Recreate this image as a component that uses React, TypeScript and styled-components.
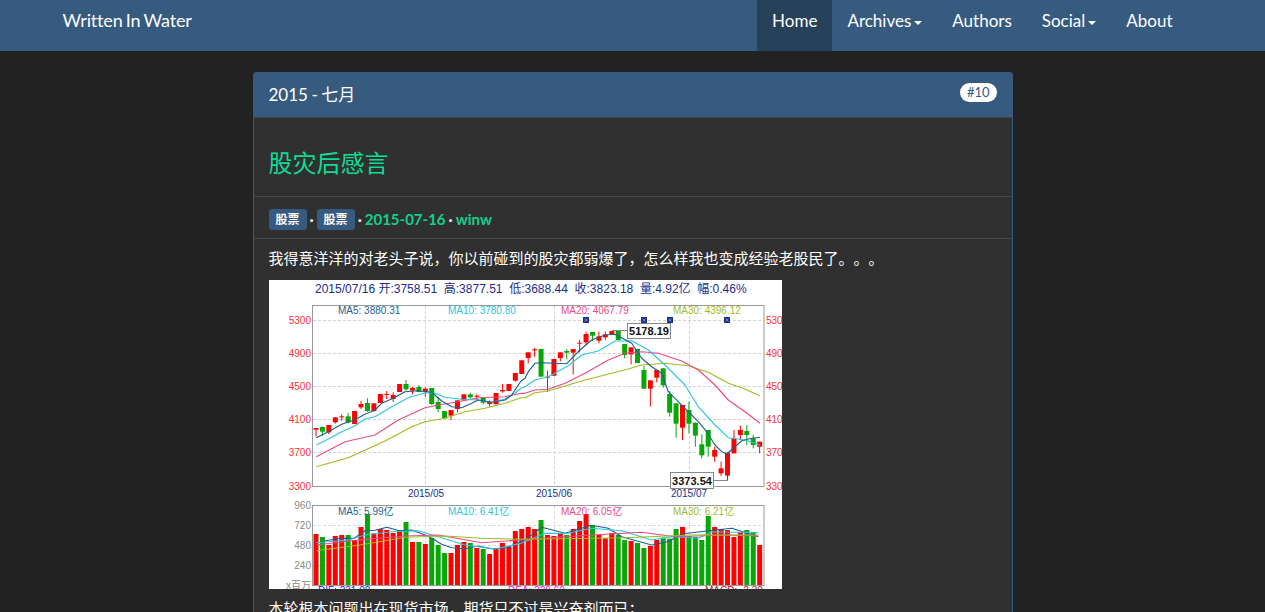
import React from "react";
import styled, { createGlobalStyle } from "styled-components";

const Global = createGlobalStyle`
  html, body { margin: 0; padding: 0; background: #222222; height: 100%; overflow: hidden; }
  body { font-family: Lato, "Noto Sans CJK SC", sans-serif; font-size: 15px; color: #ffffff; text-spacing-trim: space-all; }
`;
const Navbar = styled.nav`height: 51px; background: #375a7f;`;
const NavContainer = styled.div`
  max-width: 1170px; margin: 0 auto; padding: 0 15px; box-sizing: border-box;
  display: flex; justify-content: space-between; height: 100%;
`;
const Brand = styled.a`font-size: 18px; line-height: 41px; color: #fff; word-spacing: -1.2px; letter-spacing: -0.15px;`;
const NavList = styled.ul`display: flex; list-style: none; margin: 0; padding: 0 15px 0 0;`;
const NavItem = styled.li<{ $active?: boolean }>`
  padding: 0 15px; font-size: 17px; line-height: 41px; color: #fff;
  background: ${(p) => (p.$active ? "#28415b" : "transparent")};
`;
const Caret = styled.span`
  display: inline-block; width: 0; height: 0; margin-left: 3px; vertical-align: middle;
  border-top: 4px solid #fff; border-left: 4px solid transparent; border-right: 4px solid transparent;
`;
const Main = styled.main`width: 760px; margin: 21px auto 0;`;
const Panel = styled.section`
  border: 1px solid #375a7f; border-radius: 4px; background: #303030; box-sizing: border-box; height: 700px;
`;
const PanelHeading = styled.header`
  height: 45px; margin: -1px -1px 0; padding: 0 16px 0 16px; background: #375a7f;
  border-radius: 4px 4px 0 0; display: flex; justify-content: space-between;
  border-bottom: 1px solid #464646;
`;
const PanelTitle = styled.h3`margin: 0; font-size: 17px; font-weight: 400; line-height: 45px; color: #fff; word-spacing: -0.8px;`;
const Badge = styled.span`
  margin: 11px 0 0; height: 19px; padding: 0 7px; border-radius: 10px; background: #fff; color: #375a7f;
  font-size: 13px; line-height: 19px;
`;
const TitleRow = styled.div`height: 79px; padding: 0 15px; display: flex; align-items: center; border-bottom: 1px solid #464646; box-sizing: border-box;`;
const PostTitle = styled.h2`margin: 8px 0 0; font-size: 24px; font-weight: 400; color: #0cdc94; font-family: "Noto Sans CJK SC", sans-serif;`;
const MetaRow = styled.div`
  height: 42px; padding: 3px 15px 0; display: flex; align-items: center; gap: 3px; border-bottom: 1px solid #464646;
  box-sizing: border-box;
`;
const Tag = styled.span`
  width: 38px; height: 21px; border-radius: 3px; background: #375a7f; color: #fff; font-size: 12px; font-weight: 700;
  line-height: 21px; text-align: center;
`;
const Dot = styled.span`color: #fff; font-weight: 700; font-size: 15px;`;
const MetaLink = styled.a`color: #10d08c; font-weight: 700; font-size: 15px;`;
const Content = styled.div`padding: 8px 15px 0;`;
const Para = styled.p`margin: 0 0 12px; line-height: 21px; color: #fff; font-family: "Noto Sans CJK SC", sans-serif; font-size: 15px;`;
const ChartSvg = styled.svg`display: block; width: 513px; height: 309px; background: #fff; margin-bottom: 8px; overflow: hidden;
  text { font-family: "Liberation Sans", "Noto Sans CJK SC", sans-serif; font-size: 10px; }
`;

type C = [number, number, number, number, "r" | "g"];
const candles: C[] = [
  [459,485,459,464,"r"],[455,483,456,470,"g"],[450,477,450,472,"r"],[427,446,427,442,"r"],[418,438,424,427,"r"],
  [414,445,424,442,"g"],[408,447,408,447,"r"],[378,402,387,397,"r"],[370,410,384,408,"g"],[385,410,385,408,"r"],
  [357,384,357,384,"r"],[348,372,357,360,"r"],[352,381,360,372,"r"],[327,351,327,351,"r"],[315,347,327,343,"g"],
  [335,358,339,347,"r"],[330,352,336,351,"g"],[337,365,341,351,"r"],[339,390,339,387,"g"],[365,412,381,402,"g"],
  [408,432,408,430,"g"],[405,435,405,422,"r"],[376,412,376,402,"r"],[358,376,358,376,"r"],[353,371,358,367,"g"],
  [358,375,362,365,"r"],[365,388,367,383,"g"],[376,395,381,387,"r"],[354,388,354,388,"r"],[327,353,345,349,"r"],
  [327,348,327,348,"r"],[294,320,294,317,"r"],[256,297,256,297,"r"],[232,265,232,249,"r"],[219,245,223,226,"r"],
  [222,305,222,305,"g"],[287,350,305,308,"r"],[252,302,252,302,"r"],[232,259,232,249,"r"],[222,253,228,233,"g"],
  [222,298,222,233,"r"],[195,232,203,206,"r"],[170,210,177,202,"r"],[171,198,171,182,"g"],[170,205,184,197,"r"],
  [170,195,178,187,"r"],[168,178,168,178,"r"],[167,195,167,195,"g"],[207,250,207,240,"g"],[217,268,217,238,"r"],
  [222,264,222,264,"g"],[273,341,285,341,"g"],[316,394,316,341,"r"],[285,322,285,308,"r"],[280,338,280,331,"g"],
  [348,425,357,413,"g"],[385,488,385,446,"g"],[390,495,390,458,"r"],[380,475,405,446,"g"],[443,515,443,482,"g"],
  [478,550,508,541,"g"],[465,545,465,515,"g"],[515,560,525,545,"r"],[560,603,580,595,"r"],[533,615,533,602,"r"],
  [465,535,490,535,"r"],[452,495,465,480,"r"],[450,510,468,480,"g"],[480,520,490,510,"g"],[500,535,500,515,"r"],
];
const vols: [number, "r" | "g"][] = [
  [282,"r"],[291,"g"],[315,"r"],[288,"r"],[285,"r"],[285,"g"],[300,"r"],[261,"r"],[222,"g"],[280,"r"],[267,"r"],[270,"r"],
  [279,"r"],[270,"r"],[246,"g"],[306,"r"],[306,"g"],[312,"r"],[294,"g"],[315,"g"],[339,"g"],[339,"r"],[315,"r"],[306,"r"],
  [309,"g"],[324,"r"],[327,"g"],[342,"r"],[327,"r"],[309,"r"],[321,"r"],[273,"r"],[267,"r"],
  [261,"r"],[267,"r"],[240,"g"],[285,"r"],[288,"r"],[282,"r"],[285,"g"],[267,"r"],[243,"r"],[222,"r"],[255,"g"],[285,"r"],
  [295,"r"],[279,"r"],[285,"g"],[300,"g"],[303,"r"],[309,"g"],[324,"g"],[318,"r"],[300,"r"],[293,"g"],[296,"g"],[267,"g"],
  [261,"r"],[288,"g"],[291,"g"],[300,"g"],[228,"g"],[261,"r"],[267,"r"],[270,"r"],[291,"r"],[276,"r"],[270,"g"],[276,"g"],[315,"r"],
];
type Pt = [number, number];
const COL = { ma5: "#1f5f8f", ma10: "#2cc5e2", ma20: "#ec4a84", ma30: "#9fbd1f" };
const priceLines: [string, Pt[], Pt[]][] = [
  [COL.ma30, [[154,575],[250,548],[360,498],[440,455],[480,440],[540,430],[600,410],[660,400],[720,385],[768,368]],
    [[0,368],[30,353],[70,348],[130,330],[180,315],[260,295],[310,282],[350,270],[420,265],[490,272],[550,292],[610,325],[650,338],[705,362]]],
  [COL.ma20, [[154,545],[240,500],[330,480],[400,435],[480,398],[520,390],[580,380],[640,368],[720,365],[768,355]],
    [[0,355],[30,345],[70,343],[120,325],[180,295],[250,255],[300,235],[350,230],[400,235],[470,258],[520,285],[570,330],[610,375],[660,410],[705,445]]],
  [COL.ma10, [[154,510],[190,492],[230,470],[270,452],[300,432],[330,425],[380,395],[430,368],[480,353],[510,355],[540,367],[590,373],[640,375],[680,382],[720,372],[750,355],[768,340]],
    [[0,335],[30,315],[70,305],[130,272],[170,240],[220,228],[270,198],[320,197],[370,225],[420,270],[480,330],[520,395],[570,450],[610,488],[660,495],[705,510]]],
  [COL.ma5, [[154,488],[190,470],[230,448],[268,435],[300,418],[330,405],[350,385],[385,370],[420,350],[460,347],[500,352],[530,378],[560,395],[590,398],[620,385],[640,375],[680,382],[720,375],[740,360],[768,318]],
    [[0,310],[10,290],[30,265],[50,263],[125,266],[165,225],[200,195],[240,180],[270,178],[320,205],[350,250],[380,275],[410,295],[430,350],[480,400],[520,440],[545,470],[570,510],[590,530],[605,537],[625,520],[650,497],[680,490],[705,487]]],
];
const volLines: [string, Pt[], Pt[]][] = [
  [COL.ma5, [[154,310],[190,301],[230,295],[268,295],[300,272],[330,271],[366,262],[403,272],[440,270],[480,285],[500,295],[530,313],[560,323],[600,326],[640,318],[680,326],[720,325],[750,313],[768,305]],
    [[0,300],[50,262],[120,280],[200,256],[250,265],[290,290],[380,315],[430,305],[470,282],[550,272],[620,265],[700,290]]],
  [COL.ma10, [[154,308],[250,300],[300,285],[380,275],[460,272],[520,290],[600,315],[690,327],[768,310]],
    [[0,305],[60,280],[130,280],[200,265],[290,272],[380,300],[440,290],[520,295],[560,275],[700,278]]],
  [COL.ma20, [[154,315],[280,300],[420,288],[520,285],[650,308],[768,300]],
    [[50,295],[200,285],[350,277],[450,290],[600,285],[700,288]]],
  [COL.ma30, [[154,332],[300,313],[420,292],[540,288],[650,295],[768,298]],
    [[100,296],[300,293],[500,285],[700,285]]],
];
const RED = "#fe0000";
const GREEN = "#06a706";
const NAVY = "#1c2e8c";
const cx = (i: number) => 47 + 6.43 * i;
const py = (z: number) => z / 3 - 5;
const pts = (l: Pt[], r: Pt[], yf: (n: number) => number) =>
  [...l.map(([x, y]) => `${(x / 3 - 4).toFixed(1)},${yf(y).toFixed(1)}`), ...r.map(([x, y]) => `${(256 + x / 3).toFixed(1)},${yf(y).toFixed(1)}`)].join(" ");

const X = (x: number) => x - 269;
const Y = (y: number) => y - 280;

const Chart = () => (
  <ChartSvg viewBox="0 0 513 309" role="img">
    <text x={X(315)} y={Y(293)} fill={NAVY} style={{ fontSize: 12 }} xmlSpace="preserve">2015/07/16 开:3758.51  高:3877.51  低:3688.44  收:3823.18  量:4.92亿  幅:0.46%</text>
    {[320, 353, 386, 419, 452].map((y) => (
      <line key={y} x1={X(313)} x2={X(764)} y1={Y(y) + 0.5} y2={Y(y) + 0.5} stroke="#d4d4d4" strokeDasharray="3 2" />
    ))}
    {[525, 545, 565].map((y) => (
      <line key={y} x1={X(313)} x2={X(764)} y1={Y(y) + 0.5} y2={Y(y) + 0.5} stroke="#dcdcdc" strokeDasharray="3 2" />
    ))}
    {[425, 554, 689].map((x) => (
      <React.Fragment key={x}>
        <line x1={X(x) + 0.5} x2={X(x) + 0.5} y1={Y(306)} y2={Y(486)} stroke="#d4d4d4" strokeDasharray="3 2" />
        <line x1={X(x) + 0.5} x2={X(x) + 0.5} y1={Y(506)} y2={Y(585)} stroke="#dcdcdc" strokeDasharray="3 2" />
      </React.Fragment>
    ))}
    {vols.map(([z, c], i) => (
      <rect key={i} x={cx(i) - 2.5} y={160 + z / 3} width={5} height={(435 - z) / 3} fill={c === "r" ? RED : GREEN} />
    ))}
    {candles.map(([hi, lo, t, b, c], i) => {
      const f = c === "r" ? RED : GREEN;
      const x = cx(i);
      return (
        <g key={i}>
          <line x1={x} x2={x} y1={py(hi)} y2={py(lo)} stroke={f} />
          <rect x={x - 2.5} y={py(t)} width={5} height={Math.max(1, (b - t) / 3)} fill={f} />
        </g>
      );
    })}
    {priceLines.map(([c, l, r]) => (
      <polyline key={c} points={pts(l, r, py)} fill="none" stroke={c} strokeWidth={1.15} strokeLinejoin="round" />
    ))}
    {volLines.map(([c, l, r]) => (
      <polyline key={c} points={pts(l, r, (z) => 160 + z / 3)} fill="none" stroke={c} strokeWidth={1.15} strokeLinejoin="round" />
    ))}
    <rect x={X(312.5)} y={Y(305.5)} width={451.5} height={181} fill="none" stroke="#999" />
    <rect x={X(312.5)} y={Y(505.5)} width={451.5} height={80} fill="none" stroke="#999" />
    {["5300", "4900", "4500", "4100", "3700", "3300"].map((t, i) => (
      <React.Fragment key={t}>
        <text x={X(311)} y={Y([324, 357, 390, 423, 456, 490][i])} fill="#fb2f3a" textAnchor="end">{t}</text>
        <text x={X(766)} y={Y([324, 357, 390, 423, 456, 490][i])} fill="#fb2f3a">{t.slice(0, 3)}</text>
      </React.Fragment>
    ))}
    {["960", "720", "480", "240"].map((t, i) => (
      <text key={t} x={X(311)} y={Y([509, 529, 549, 569][i])} fill="#8a8a8a" textAnchor="end">{t}</text>
    ))}
    <text x={X(286)} y={Y(589)} fill="#8a8a8a">x百万</text>
    {[["2015/05", 426], ["2015/06", 554], ["2015/07", 689]].map(([t, x]) => (
      <text key={t as string} x={X(x as number)} y={Y(497)} fill={NAVY} textAnchor="middle">{t}</text>
    ))}
    {[["MA5: 3880.31", 338, COL.ma5], ["MA10: 3780.80", 448, COL.ma10], ["MA20: 4067.79", 561, COL.ma20], ["MA30: 4396.12", 673, COL.ma30]].map(([t, x, c]) => (
      <text key={t as string} x={X(x as number)} y={Y(314)} fill={c as string}>{t}</text>
    ))}
    {[["MA5: 5.99亿", 338, COL.ma5], ["MA10: 6.41亿", 448, COL.ma10], ["MA20: 6.05亿", 561, COL.ma20], ["MA30: 6.21亿", 673, COL.ma30]].map(([t, x, c]) => (
      <text key={t as string} x={X(x as number)} y={Y(515)} fill={c as string}>{t}</text>
    ))}
    <text x={X(318)} y={Y(594)} fill="#1a1aff">DIF: 231.08</text>
    <text x={X(508)} y={Y(594)} fill="#f020f0">DEA: 229.60</text>
    <text x={X(705)} y={Y(594)} fill="#c02020">MACD: -2.30</text>
    {[586, 644, 670, 727].map((x) => (
      <g key={x} transform={`translate(${X(x)},${Y(320)})`}>
        <rect x={-3} y={-3} width={6} height={6} fill="#1c2e8c" />
        <path d="M-1.5 -1.5L1.5 1.5M1.5 -1.5L-1.5 1.5" stroke="#9aa6d8" strokeWidth={0.7} />
      </g>
    ))}
    <path d={`M${X(612)} ${Y(330.5)}H${X(627)}`} stroke="#888" fill="none" />
    <rect x={X(627.5)} y={Y(323.5)} width={43} height={15} fill="#fff" stroke="#888" />
    <text x={X(649)} y={Y(334.5)} fill="#111" textAnchor="middle" fontWeight="700" style={{ fontSize: 11 }}>5178.19</text>
    <path d={`M${X(714)} ${Y(480.5)}H${X(728)}`} stroke="#888" fill="none" />
    <rect x={X(670.5)} y={Y(472.5)} width={43} height={16} fill="#fff" stroke="#888" />
    <text x={X(692)} y={Y(484.5)} fill="#111" textAnchor="middle" fontWeight="700" style={{ fontSize: 11 }}>3373.54</text>
  </ChartSvg>
);

export default function App() {
  return (
    <>
      <Global />
      <Navbar>
        <NavContainer>
          <Brand>Written In Water</Brand>
          <NavList>
            <NavItem $active>Home</NavItem>
            <NavItem>Archives<Caret /></NavItem>
            <NavItem>Authors</NavItem>
            <NavItem>Social<Caret /></NavItem>
            <NavItem>About</NavItem>
          </NavList>
        </NavContainer>
      </Navbar>
      <Main>
        <Panel>
          <PanelHeading>
            <PanelTitle>2015 - 七月</PanelTitle>
            <Badge>#10</Badge>
          </PanelHeading>
          <TitleRow><PostTitle>股灾后感言</PostTitle></TitleRow>
          <MetaRow>
            <Tag>股票</Tag><Dot>·</Dot><Tag>股票</Tag><Dot>·</Dot>
            <MetaLink>2015-07-16</MetaLink><Dot>·</Dot><MetaLink>winw</MetaLink>
          </MetaRow>
          <Content>
            <Para>我得意洋洋的对老头子说，你以前碰到的股灾都弱爆了，怎么样我也变成经验老股民了。。。</Para>
            <Chart />
            <Para>本轮根本问题出在现货市场，期货只不过是兴奋剂而已；</Para>
          </Content>
        </Panel>
      </Main>
    </>
  );
}
